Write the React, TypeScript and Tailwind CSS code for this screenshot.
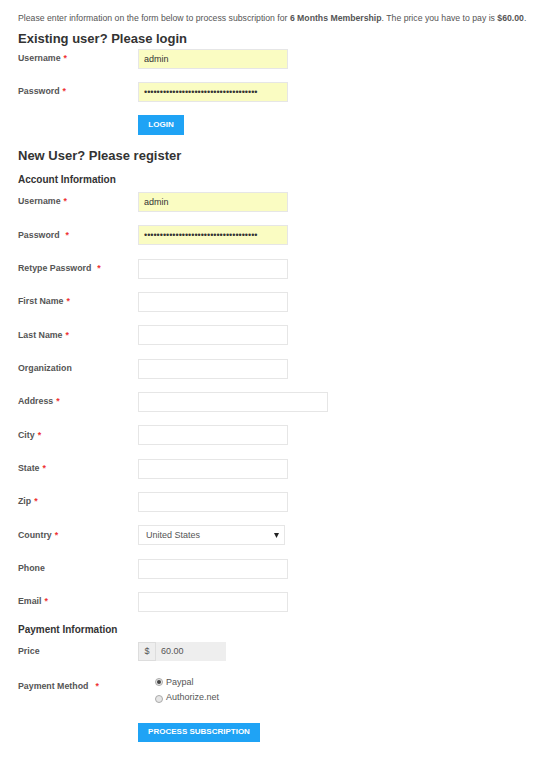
import { useState } from 'react';

const Req = () => <span className="ml-[3px] text-[#e33]">*</span>;

function Row({ label, required, value, filled, password, wide, gap }: { label: string; required?: boolean; value?: string; filled?: boolean; password?: boolean; wide?: boolean; gap?: boolean }) {
  return (
    <div className="flex items-center h-[20px]">
      <label className="w-[120px] shrink-0 font-bold text-[8.8px] text-[#555]">
        {label}
        {required && (gap ? <span className="ml-[6px] text-[#e33]">*</span> : <Req />)}
      </label>
      <input
        type={password ? 'password' : 'text'}
        defaultValue={value}
        className={`h-[20px] ${wide ? 'w-[190px]' : 'w-[150px]'} border border-[#e6e6e6] px-[5px] text-[9px] text-[#333] outline-none ${filled ? 'bg-[#fafcc2]' : 'bg-white'}`}
      />
    </div>
  );
}

export default function App() {
  const [method, setMethod] = useState('paypal');
  const pw = '••••••••••••••••••••••••••••••••••••';

  return (
    <div className="min-h-[760px] bg-white px-[18px] font-['Liberation_Sans',Arial,sans-serif] text-[#555]">
      <p className="pt-[12px] text-[8.7px] leading-[12px] whitespace-nowrap">
        Please enter information on the form below to process subscription for <b>6 Months Membership</b>. The price you have to pay is <b>$60.00</b>.
      </p>

      <h3 className="mt-[7px] text-[13px] font-bold leading-[16px] text-[#333]">Existing user? Please login</h3>
      <div className="mt-[2px] flex flex-col gap-[13px]">
        <Row label="Username" required value="admin" filled />
        <Row label="Password" required value={pw} filled password />
        <div className="flex pl-[120px]">
          <button className="h-[20px] w-[46px] bg-[#1fa3f5] text-[8px] font-bold text-white">LOGIN</button>
        </div>
      </div>

      <h3 className="mt-[13px] text-[13px] font-bold leading-[16px] text-[#333]">New User? Please register</h3>
      <h4 className="mt-[10px] text-[10px] font-bold leading-[12px] text-[#333]">Account Information</h4>
      <div className="mt-[6px] flex flex-col gap-[13.33px]">
        <Row label="Username" required value="admin" filled />
        <Row label="Password" required gap value={pw} filled password />
        <Row label="Retype Password" required gap />
        <Row label="First Name" required />
        <Row label="Last Name" required />
        <Row label="Organization" />
        <Row label="Address" required wide />
        <Row label="City" required />
        <Row label="State" required />
        <Row label="Zip" required />
        <div className="flex items-center h-[20px]">
          <label className="w-[120px] shrink-0 font-bold text-[8.8px] text-[#555]">Country<Req /></label>
          <div className="relative flex h-[20px] w-[147px] items-center border border-[#e6e6e6] pl-[7px] text-[9px] text-[#555]">
            United States
            <svg className="absolute right-[5px] top-[7px]" width="5" height="5" viewBox="0 0 5 5"><path d="M0 0h5L2.5 5z" fill="#222" /></svg>
          </div>
        </div>
        <Row label="Phone" />
        <Row label="Email" required />
      </div>

      <h4 className="mt-[12px] text-[10px] font-bold leading-[12px] text-[#333]">Payment Information</h4>
      <div className="mt-[6px] flex items-center h-[19px]">
        <label className="w-[120px] shrink-0 font-bold text-[8.8px] text-[#555]">Price</label>
        <div className="flex h-[19px] w-[88px] bg-[#eee] text-[9px] text-[#555]">
          <span className="flex w-[18px] items-center justify-center border border-[#ddd]">$</span>
          <span className="flex items-center pl-[5px]">60.00</span>
        </div>
      </div>

      <div className="mt-[14px] flex">
        <label className="mt-[5px] w-[120px] shrink-0 font-bold text-[8.8px] leading-[12px] text-[#555]">
          Payment Method<span className="ml-[7px] text-[#e33]">*</span>
        </label>
        <div className="pl-[17px] text-[9px] leading-[15px] text-[#555]">
          {[['paypal', 'Paypal'], ['authorize', 'Authorize.net']].map(([k, t]) => (
            <label key={k} className="flex items-center" onClick={() => setMethod(k)}>
              <span className={`mr-[3px] flex h-[8px] w-[8px] items-center justify-center rounded-full border border-[#aaa] bg-[#e6e6e6] ${k === 'paypal' ? '' : 'mt-[4px]'}`}>
                {method === k && <span className="h-[4px] w-[4px] rounded-full bg-[#444]" />}
              </span>
              {t}
            </label>
          ))}
        </div>
      </div>

      <div className="mt-[18px] flex pl-[120px]">
        <button className="h-[19px] w-[122px] bg-[#1fa3f5] text-[8px] font-bold text-white">PROCESS SUBSCRIPTION</button>
      </div>
    </div>
  );
}
